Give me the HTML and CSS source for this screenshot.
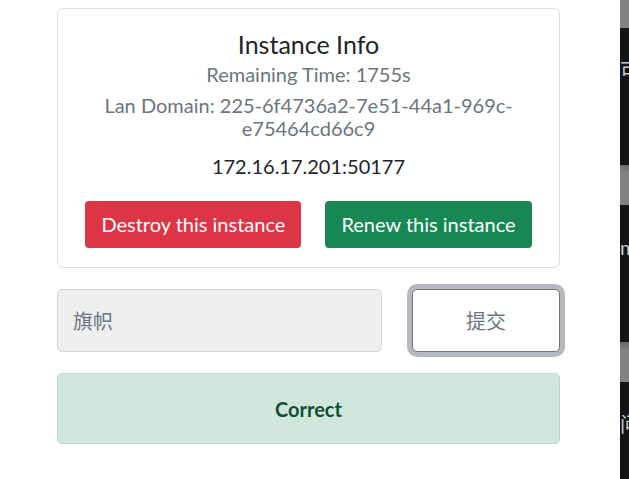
FILE: index.html
```html
<!DOCTYPE html>
<html lang="zh">
<head>
<meta charset="utf-8">
<link rel="stylesheet" href="styles.css">
</head>
<body>
<div class="page">
  <main class="main">
    <section class="card">
      <h2 class="title">Instance Info</h2>
      <p class="muted">Remaining Time: 1755s</p>
      <p class="muted domain">Lan Domain: 225-6f4736a2-7e51-44a1-969c-e75464cd66c9</p>
      <p class="addr">172.16.17.201:50177</p>
      <div class="actions">
        <button class="btn btn-red">Destroy this instance</button>
        <button class="btn btn-green">Renew this instance</button>
      </div>
    </section>
    <form class="flag-row">
      <input class="flag-input" type="text" placeholder="旗帜">
      <button class="submit" type="button">提交</button>
    </form>
    <div class="alert">Correct</div>
  </main>
  <aside class="side">
    <div class="side-item"><div class="thumb thumb-first"></div><div class="side-text">可</div></div>
    <div class="side-item"><div class="thumb"></div><div class="side-text">m</div></div>
    <div class="side-item"><div class="thumb"></div><div class="side-text">问</div></div>
  </aside>
</div>
</body>
</html>
```
FILE: styles.css
```css
html, body {
  margin: 0;
  padding: 0;
  background: #fff;
  height: 100%;
  overflow: hidden;
}
body {
  font-family: Lato, "Noto Sans CJK SC", sans-serif;
  color: #212529;
}
.page {
  display: flex;
  height: 479px;
}
.main {
  flex: 1;
  padding: 8px 0 0 57px;
  display: flex;
  flex-direction: column;
  gap: 21px;
}
.card {
  width: 501px;
  height: 258px;
  box-sizing: content-box;
  border: 1px solid #dfdfdf;
  border-radius: 6px;
  padding: 0;
  text-align: center;
}
.title {
  margin: 20px 0 4px;
  font-size: 25px;
  font-weight: 400;
  line-height: 30px;
}
.muted {
  margin: 0;
  color: #6c757d;
  font-size: 20px;
  line-height: 23.5px;
}
.domain {
  margin-top: 7px;
  padding: 0 40px;
}
.addr {
  margin: 13px 0 0;
  font-size: 20px;
  line-height: 24px;
}
.actions {
  margin-top: 23.5px;
  display: flex;
  justify-content: center;
  gap: 24px;
}
.btn {
  font-family: inherit;
  font-size: 20px;
  line-height: 27px;
  height: 47px;
  padding: 0 16px;
  border: 0;
  border-radius: 4px;
  color: #fff;
}
.btn-red { background: #dc3545; }
.btn-green { background: #198754; }
.flag-row {
  margin: 0;
  display: flex;
  gap: 30px;
  width: 503px;
}
.flag-input {
  width: 325px;
  height: 63px;
  box-sizing: border-box;
  background: #efefef;
  border: 1px solid #d3d6da;
  border-radius: 5px;
  padding: 0 15px;
  font-family: inherit;
  font-size: 20px;
  color: #212529;
}
.flag-input::placeholder { color: #6c757d; }
.submit {
  width: 148px;
  height: 63px;
  box-sizing: border-box;
  background: #fff;
  border: 1px solid #6c757d;
  border-radius: 5px;
  box-shadow: 0 0 0 5px #b6babe;
  font-family: inherit;
  font-size: 20px;
  color: #6c757d;
}
.alert {
  width: 501px;
  height: 71px;
  box-sizing: border-box;
  background: #d1e7dd;
  border: 1px solid #badbcc;
  border-radius: 5px;
  color: #0f5132;
  font-weight: 700;
  font-size: 20px;
  display: flex;
  align-items: center;
  justify-content: center;
  width: 503px;
}
.side {
  width: 9px;
  background: #141517;
  overflow: hidden;
}
.side-item {
  height: 177px;
}
.thumb {
  height: 40px;
  background: linear-gradient(#6a6a6a, #828282 8px, #828282);
}
.thumb-first {
  margin-top: -12px;
}
.side-text {
  margin-top: 28px;
  font-size: 20px;
  line-height: 28px;
  color: #c8ccd2;
  white-space: nowrap;
}
```
